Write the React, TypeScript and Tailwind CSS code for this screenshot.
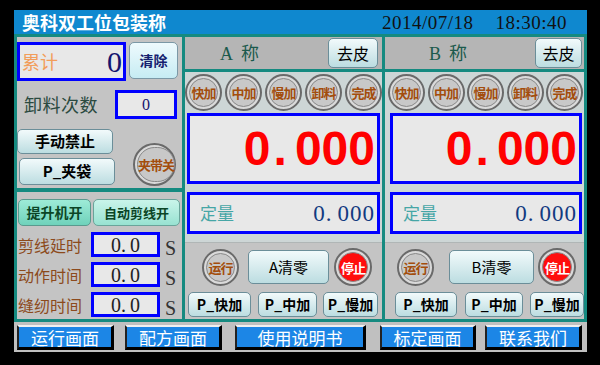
const CJK = { fontFamily: '"Noto Sans CJK SC", "Noto Sans", sans-serif' };
const SERIF = { fontFamily: '"Liberation Serif", "Noto Sans CJK SC", serif' };
const SANS = { fontFamily: '"Liberation Sans", "Noto Sans CJK SC", sans-serif' };

function Ring({ label, size, red = false }: { label: string; size: string; red?: boolean }) {
  return (
    <div className={`flex shrink-0 rounded-full border-[2px] border-[#6a6a6a] bg-[#dadada] p-[2px] ${size}`}>
      <div
        className={`flex flex-1 items-center justify-center rounded-full border border-[#888] ${
          red ? "bg-[#ff0d0d]" : "bg-[#c8c8c8]"
        }`}
      >
        <span
          className={`whitespace-nowrap text-[13px] font-bold leading-none tracking-[-1px] ${
            red ? "text-white" : "text-[#a34d0c]"
          }`}
          style={CJK}
        >
          {label}
        </span>
      </div>
    </div>
  );
}

function Btn({ label, className, bold = true }: { label: string; className: string; bold?: boolean }) {
  return (
    <div
      className={`flex shrink-0 items-center justify-center rounded-[5px] border border-[#6b8e99] bg-linear-to-b from-[#f2fafb] to-[#bcdde1] text-black ${
        bold ? "font-bold" : ""
      } ${className}`}
      style={CJK}
    >
      {label}
    </div>
  );
}

function ValBox({ className, children }: { className: string; children: React.ReactNode }) {
  return (
    <div className={`flex items-center border-[3px] border-[#0000ff] bg-[#e8e8e8] ${className}`}>{children}</div>
  );
}

function Scale({ b = false }: { b?: boolean }) {
  const name = b ? "B" : "A";
  return (
    <div className={`flex flex-col bg-[#c4c4c4] ${b ? "w-[199px]" : "w-[197px]"}`}>
      {/* header */}
      <div className="flex h-[32px] items-center bg-[#b5b5b5]">
        <span className={`text-[18px] text-[#1b5a4c] ${b ? "ml-[44px]" : "ml-[35px]"}`} style={SERIF}>
          {name}
          <span className="ml-[8px]" style={CJK}>
            称
          </span>
        </span>
        <Btn
          label="去皮"
          bold={false}
          className={`ml-auto h-[30px] text-[16px] ${b ? "mr-[2px] w-[47px]" : "mr-[4px] w-[50px]"}`}
        />
      </div>
      <div className="h-[3px] bg-[#158a80]" />
      {/* light section */}
      <div className="flex h-[170px] flex-col bg-[#cdd6d6]">
        <div className={`mt-[2px] flex justify-between ${b ? "pl-[3px] pr-[1px]" : "px-0"}`}>
          {["快加", "中加", "慢加", "卸料", "完成"].map((t) => (
            <Ring key={t} label={t} size="w-[37px] h-[37px]" />
          ))}
        </div>
        <ValBox className={`mt-[2px] h-[71px] justify-end pr-[2px] ${b ? "ml-[5px] mr-[2px]" : "mx-[2px]"}`}>
          <span className="text-[48px] font-bold leading-none text-[#ff0000]" style={SANS}>
            0<span className="ml-[3px] mr-[8px]">.</span>000
          </span>
        </ValBox>
        <ValBox className={`mt-[8px] h-[42px] justify-between pl-[10px] pr-[2px] ${b ? "ml-[5px] mr-[2px]" : "mx-[2px]"}`}>
          <span className="text-[17px] text-[#46a6a6]" style={CJK}>
            定量
          </span>
          <span className="text-[23px] leading-none tracking-[1px] text-[#123a80]" style={SERIF}>
            0.<span className="ml-[5px]">000</span>
          </span>
        </ValBox>
      </div>
      {/* controls */}
      <div className="flex flex-1 flex-col border-t border-[#b0b6b6]">
        <div className="mt-[5px] flex items-center">
          <Ring label="运行" size={`w-[37px] h-[37px] ${b ? "ml-[12px]" : "ml-[17px]"}`} />
          <Btn
            label={`${name}清零`}
            bold={false}
            className={`h-[34px] text-[15px] text-[#333] ${b ? "ml-[15px] w-[85px]" : "ml-[9px] w-[81px]"}`}
          />
          <Ring label="停止" red size={`w-[38px] h-[38px] ${b ? "ml-[4px]" : "ml-[5px]"}`} />
        </div>
        <div className="mt-[6px] flex">
          <Btn label="P_快加" className={`h-[25px] text-[14px] ${b ? "ml-[10px] w-[62px]" : "ml-[3px] w-[63px]"}`} />
          <Btn label="P_中加" className={`h-[25px] text-[14px] ${b ? "ml-[8px] w-[58px]" : "ml-[7px] w-[59px]"}`} />
          <Btn label="P_慢加" className={`h-[25px] text-[14px] ${b ? "ml-[7px] w-[54px]" : "ml-[6px] w-[55px]"}`} />
        </div>
      </div>
    </div>
  );
}

function TimeRow({ label }: { label: string }) {
  return (
    <div className="flex h-[25px] items-center">
      <span className="ml-[1px] w-[73px] text-[16px] text-[#8c4a1c]" style={CJK}>
        {label}
      </span>
      <ValBox className="h-[25px] w-[69px] justify-center">
        <span className="text-[20px] leading-none text-[#222]" style={SERIF}>
          0.<span className="ml-[4px]">0</span>
        </span>
      </ValBox>
      <span className="ml-[5px] mt-[6px] text-[20px] leading-none text-[#333]" style={SERIF}>
        S
      </span>
    </div>
  );
}

export default function App() {
  const nav = [
    { t: "运行画面", c: "ml-[3px] w-[97px]" },
    { t: "配方画面", c: "ml-[11px] w-[97px]" },
    { t: "使用说明书", c: "ml-[13px] w-[131px]" },
    { t: "标定画面", c: "ml-[14px] w-[96px]" },
    { t: "联系我们", c: "ml-[9px] w-[97px]" },
  ];
  return (
    <div className="h-[365px] w-[600px] overflow-hidden bg-black pl-[14px] pt-[10px]">
      <div className="flex h-[342px] w-[573px] flex-col">
        {/* title bar */}
        <div className="flex h-[24px] items-center bg-[#0f88cf]">
          <span className="ml-[8px] text-[18px] font-bold leading-none text-white" style={CJK}>
            奥科双工位包装称
          </span>
          <span className="ml-auto mr-[20px] text-[19px] leading-none tracking-[0.5px] text-[#111]" style={SERIF}>
            2014/07/18
            <span className="ml-[22px]">18:30:40</span>
          </span>
        </div>
        {/* main */}
        <div className="flex h-[288px] gap-[3px] bg-[#158a80] p-[3px]">
          <div className="flex w-[165px] flex-col gap-[4px]">
            <div className="flex h-[151px] flex-col bg-[#c4c4c4]">
              <div className="mt-[5px] flex items-start">
                <ValBox className="h-[39px] w-[109px] justify-between pl-[2px] pr-[1px]">
                  <span className="text-[18px] text-[#f29d5a]" style={CJK}>
                    累计
                  </span>
                  <span className="text-[30px] leading-none text-[#14146e]" style={SERIF}>
                    0
                  </span>
                </ValBox>
                <div
                  className="ml-[3px] flex h-[37px] w-[49px] items-center justify-center rounded-[5px] border border-[#7b98a6] bg-linear-to-b from-[#eefafd] to-[#c6ecf3] text-[14px] font-bold text-[#15206e]"
                  style={CJK}
                >
                  清除
                </div>
              </div>
              <div className="mt-[9px] flex items-center">
                <span className="ml-[7px] text-[18px] tracking-[0.5px] text-[#2b4a40]" style={CJK}>
                  卸料次数
                </span>
                <ValBox className="ml-auto mr-[5px] h-[29px] w-[62px] justify-center">
                  <span className="text-[16px] leading-none text-[#14146e]" style={SERIF}>
                    0
                  </span>
                </ValBox>
              </div>
              <div className="mt-[10px] flex">
                <div className="flex flex-col gap-[4px]">
                  <Btn label="手动禁止" className="h-[25px] w-[96px] text-[15px]" />
                  <Btn label="P_夹袋" className="ml-[2px] h-[27px] w-[96px] text-[15px]" />
                </div>
                <div className="ml-[18px] mt-[14px]">
                  <Ring label="夹带关" size="w-[43px] h-[43px]" />
                </div>
              </div>
            </div>
            <div className="flex flex-1 flex-col bg-[#c4c4c4]">
              <div className="mt-[7px] flex">
                <div
                  className="ml-[1px] flex h-[27px] w-[73px] items-center justify-center rounded-[5px] border border-[#5a9a8e] bg-linear-to-b from-[#9debd7] to-[#6fd2bb] text-[14px] font-bold text-[#0b4526]"
                  style={CJK}
                >
                  提升机开
                </div>
                <div
                  className="ml-[2px] flex h-[27px] w-[87px] items-center justify-center rounded-[5px] border border-[#6aa49a] bg-linear-to-b from-[#c9f4ea] to-[#98e2d1] text-[13px] font-bold text-[#0b4526]"
                  style={CJK}
                >
                  自动剪线开
                </div>
              </div>
              <div className="mt-[6px] flex flex-col gap-[5px]">
                <TimeRow label="剪线延时" />
                <TimeRow label="动作时间" />
                <TimeRow label="缝纫时间" />
              </div>
            </div>
          </div>
          <Scale />
          <Scale b />
        </div>
        {/* nav */}
        <div className="flex h-[30px] items-start bg-[#c0c0c0] pt-[3px]">
          {nav.map((n) => (
            <div
              key={n.t}
              className={`flex h-[25px] items-center justify-center border-b-[3px] border-l-[2px] border-r-[3px] border-t-[2px] border-b-black border-l-[#222] border-r-black border-t-[#f0f0f0] bg-[#1c86e6] text-[17px] leading-none text-white ${n.c}`}
              style={CJK}
            >
              {n.t}
            </div>
          ))}
        </div>
      </div>
    </div>
  );
}
